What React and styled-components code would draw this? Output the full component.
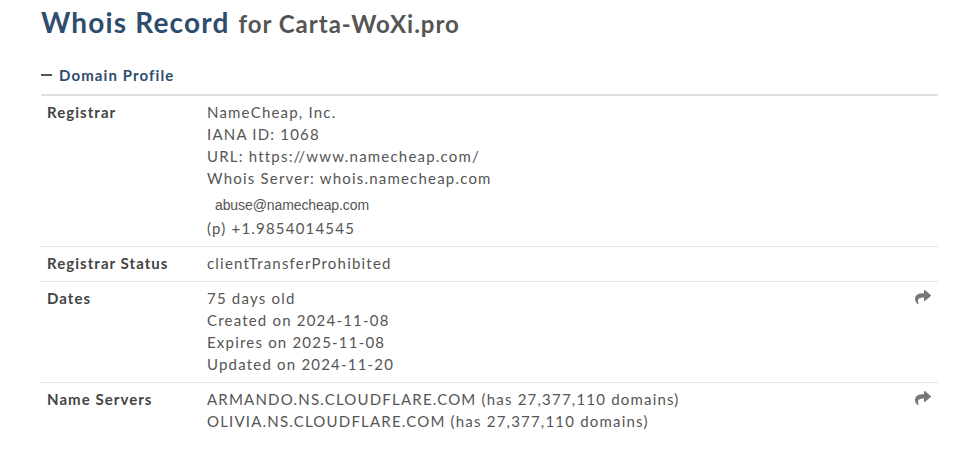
import React from "react";
import styled, { createGlobalStyle } from "styled-components";
import { FaShare } from "react-icons/fa";

const Global = createGlobalStyle`
  html, body { margin: 0; padding: 0; background: #fff; }
  body { font-family: Lato, "Open Sans", sans-serif; color: #555; }
`;

const Page = styled.div`
  padding: 3px 24px 0 41px;
  width: 897px;
`;

const Title = styled.h1`
  margin: 0;
  font-size: 28px;
  font-weight: 700;
  color: #2e4d6e;
  line-height: 38px;
  letter-spacing: 1.15px;
`;

const Sub = styled.span`
  font-size: 24px;
  color: #555;
  font-weight: 700;
  letter-spacing: 1px;
  margin-left: 1px;
`;

const SectionHead = styled.div`
  margin-top: 22px;
  display: flex;
  align-items: center;
  gap: 7px;
  font-size: 15px;
  line-height: 20px;
  font-weight: 700;
  color: #2e4d6e;
  letter-spacing: 1.1px;
  padding-bottom: 9px;
  border-bottom: 2px solid #e0e0e0;
`;

const Dash = styled.span`
  display: inline-block;
  width: 11px;
  height: 2px;
  background: #555;
`;

const Row = styled.div`
  display: grid;
  grid-template-columns: 160px 1fr 23px;
  padding: 5px 0 7px 6px;
  border-bottom: ${(p) => (p.$last ? "none" : "1px solid #e4e4e4")};
`;

const Label = styled.div`
  font-size: 15px;
  font-weight: 700;
  color: #444;
  line-height: 22px;
  letter-spacing: 1.05px;
`;

const Values = styled.div`
  display: flex;
  flex-direction: column;
`;

const Line = styled.div`
  font-size: 15px;
  line-height: 22px;
  color: #555;
  letter-spacing: 1.2px;
  white-space: nowrap;
`;

const Email = styled.div`
  font-family: "Liberation Sans", Arial, sans-serif;
  font-size: 14px;
  line-height: 24px;
  color: #555;
  letter-spacing: -0.1px;
  padding-left: 8px;
  margin-top: 4px;
`;

const Action = styled.div`
  display: flex;
  padding-top: 2px;
  color: #777;
  font-size: 16px;
  line-height: 16px;
`;

export default function App() {
  return (
    <>
      <Global />
      <Page>
        <Title>
          Whois Record <Sub>for Carta-WoXi.pro</Sub>
        </Title>
        <SectionHead>
          <Dash />
          Domain Profile
        </SectionHead>
        <Row>
          <Label>Registrar</Label>
          <Values>
            <Line>NameCheap, Inc.</Line>
            <Line>IANA ID: 1068</Line>
            <Line>URL: https://www.namecheap.com/</Line>
            <Line>Whois Server: whois.namecheap.com</Line>
            <Email>abuse@namecheap.com</Email>
            <Line>(p) +1.9854014545</Line>
          </Values>
          <div />
        </Row>
        <Row>
          <Label>Registrar Status</Label>
          <Values>
            <Line>clientTransferProhibited</Line>
          </Values>
          <div />
        </Row>
        <Row>
          <Label>Dates</Label>
          <Values>
            <Line>75 days old</Line>
            <Line>Created on 2024-11-08</Line>
            <Line>Expires on 2025-11-08</Line>
            <Line>Updated on 2024-11-20</Line>
          </Values>
          <Action>
            <FaShare />
          </Action>
        </Row>
        <Row $last>
          <Label>Name Servers</Label>
          <Values>
            <Line>ARMANDO.NS.CLOUDFLARE.COM (has 27,377,110 domains)</Line>
            <Line>OLIVIA.NS.CLOUDFLARE.COM (has 27,377,110 domains)</Line>
          </Values>
          <Action>
            <FaShare />
          </Action>
        </Row>
      </Page>
    </>
  );
}
